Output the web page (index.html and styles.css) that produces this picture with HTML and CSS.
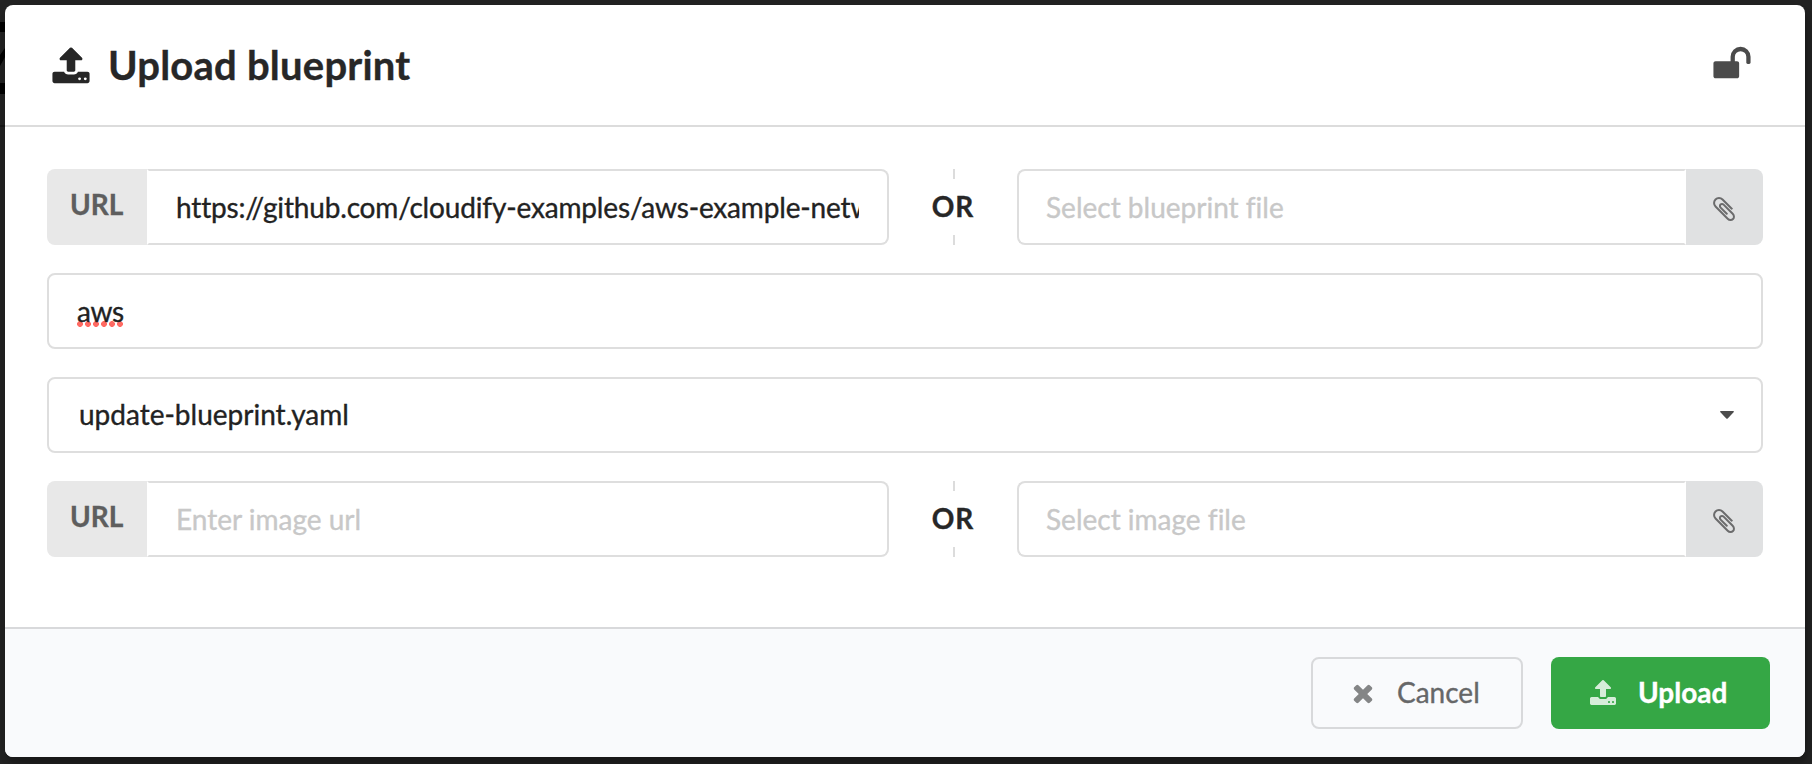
FILE: index.html
```html
<!DOCTYPE html>
<html lang="en">
<head>
<meta charset="utf-8">
<title>Upload blueprint</title>
<link rel="stylesheet" href="styles.css">
</head>
<body>
<svg class="defs" width="0" height="0">
  <symbol id="upload" viewBox="0 0 1792 1792"><path d="M1344 1472q0-26-19-45t-45-19-45 19-19 45 19 45 45 19 45-19 19-45zm256 0q0-26-19-45t-45-19-45 19-19 45 19 45 45 19 45-19 19-45zm128-224v320q0 40-28 68t-68 28h-1472q-40 0-68-28t-28-68v-320q0-40 28-68t68-28h427q21 56 70.5 92t110.5 36h256q61 0 110.5-36t70.5-92h427q40 0 68 28t28 68zm-325-648q-17 40-59 40h-256v448q0 26-19 45t-45 19h-256q-26 0-45-19t-19-45v-448h-256q-42 0-59-40-17-39 14-69l448-448q18-19 45-19t45 19l448 448q31 30 14 69z"/></symbol>
  <symbol id="unlock" viewBox="0 0 1792 1792"><path d="M1728 576v256q0 26-19 45t-45 19h-64q-26 0-45-19t-19-45v-256q0-106-75-181t-181-75-181 75-75 181v192h96q40 0 68 28t28 68v576q0 40-28 68t-68 28h-960q-40 0-68-28t-28-68v-576q0-40 28-68t68-28h672v-192q0-185 131.5-316.5t316.5-131.5 316.5 131.5 131.5 316.5z"/></symbol>
  <symbol id="clip" viewBox="0 0 1792 1792"><path d="M1596 1385q0 117-79 196t-196 79q-135 0-235-100l-777-776q-113-115-113-271 0-159 110-270t269-111q158 0 273 113l605 606q10 10 10 22 0 16-30.5 46.5t-46.5 30.5q-13 0-23-10l-606-607q-79-77-181-77-106 0-179 75t-73 181q0 105 76 181l776 777q63 63 145 63 64 0 106-42t42-106q0-82-63-145l-581-581q-26-24-60-24-29 0-48 19t-19 48q0 32 25 59l410 410q10 10 10 22 0 16-31 47t-47 31q-12 0-22-10l-410-410q-63-61-63-149 0-82 57-139t139-57q88 0 149 63l581 581q100 98 100 235z"/></symbol>
  <symbol id="times" viewBox="0 0 1792 1792"><path d="M1490 1322q0 40-28 68l-136 136q-28 28-68 28t-68-28l-294-294-294 294q-28 28-68 28t-68-28l-136-136q-28-28-28-68t28-68l294-294-294-294q-28-28-28-68t28-68l136-136q28-28 68-28t68 28l294 294 294-294q28-28 68-28t68 28l136 136q28 28 28 68t-28 68l-294 294 294 294q28 28 28 68z"/></symbol>
</svg>
<svg class="behind" width="5" height="130" viewBox="0 0 5 130">
  <path d="M0 22h5v10H0zM0 55l5-7v9l-5 9zM0 83h5v11H0z" fill="#000"/>
  <path d="M0 125h5v2H0z" fill="#181818"/>
</svg>
<main class="modal">
  <header class="header">
    <svg class="icon icon-lg"><use href="#upload"/></svg>
    <h1 class="title">Upload blueprint</h1>
    <svg class="icon icon-lg lock"><use href="#unlock"/></svg>
  </header>
  <section class="content">
    <div class="row">
      <div class="labeled">
        <span class="label">URL</span>
        <div class="field joined-left"><span class="value url">https://github.com/cloudify-examples/aws-example-network</span></div>
      </div>
      <div class="divider">OR</div>
      <div class="file">
        <div class="field joined-right"><span class="value placeholder">Select blueprint file</span></div>
        <div class="attach"><svg class="icon"><use href="#clip"/></svg></div>
      </div>
    </div>
    <div class="field"><span class="value"><span class="misspelled">aws</span></span></div>
    <div class="field dropdown">
      <span class="value">update-blueprint.yaml</span>
      <svg class="caret" viewBox="0 0 14 8"><path d="M.8 0h12.4q1.2.5.4 1.3L7.7 7.5q-.7.6-1.4 0L.4 1.3Q-.4.5.8 0z"/></svg>
    </div>
    <div class="row">
      <div class="labeled">
        <span class="label">URL</span>
        <div class="field joined-left"><span class="value placeholder">Enter image url</span></div>
      </div>
      <div class="divider">OR</div>
      <div class="file">
        <div class="field joined-right"><span class="value placeholder">Select image file</span></div>
        <div class="attach"><svg class="icon"><use href="#clip"/></svg></div>
      </div>
    </div>
  </section>
  <footer class="actions">
    <div class="button cancel"><svg class="icon"><use href="#times"/></svg><span>Cancel</span></div>
    <div class="button primary"><svg class="icon"><use href="#upload"/></svg><span>Upload</span></div>
  </footer>
</main>
</body>
</html>
```
FILE: styles.css
```css
* { box-sizing: border-box; }
html, body { height: 100%; }
body {
  margin: 0;
  padding: 5px 7px 7px 5px;
  overflow: hidden;
  background: #242424;
  font: 28px/34px Lato, "Open Sans", sans-serif;
  font-variant-ligatures: none;
  -webkit-text-stroke: .35px currentColor;
  color: #222;
}
.defs { position: absolute; }
.behind { position: absolute; left: 0; top: 0; }
.modal {
  position: relative;
  display: flex;
  flex-direction: column;
  width: 1800px;
  height: 752px;
  border-radius: 8px;
  overflow: hidden;
  background: #fff;
  box-shadow: 2px 6px 6px rgba(0, 0, 0, .2), 2px 6px 30px 4px rgba(0, 0, 0, .2);
}
.icon { display: block; flex: none; width: 28px; height: 28px; fill: currentColor; }
.icon-lg { width: 40px; height: 40px; }
.header {
  display: flex;
  align-items: flex-start;
  height: 122px;
  padding: 41px 53.5px 0 45.5px;
  border-bottom: 2px solid #dcdcdc;
  color: #272727;
}
.title { margin: -6px 0 0 17.5px; font-size: 40px; line-height: 50px; font-weight: 700; letter-spacing: .22px; }
.lock { margin: -2px 0 0 auto; color: #4b4b4b; }
.content {
  display: flex;
  flex-direction: column;
  gap: 28px;
  height: 500px;
  padding: 42px 42px 0;
}
.row { display: flex; height: 76px; }
.labeled { display: flex; width: 842px; }
.label {
  width: 100px;
  padding: 18px 0 0 23px;
  border-radius: 8px 0 0 8px;
  background: #e8e8e8;
  color: #5e5e5e;
  font-weight: 700;
}
.field {
  display: flex;
  flex: 1;
  min-width: 0;
  max-height: 76px;
  min-height: 76px;
  padding: 19px 28px 0;
  border: 2px solid #dedede;
  border-radius: 8px;
}
.joined-left { padding-left: 27px; border-left-color: transparent; border-radius: 0 8px 8px 0; }
.joined-right { padding-left: 27px; border-right-color: transparent; border-radius: 8px 0 0 8px; }
.value { flex: 1; height: 36px; overflow: hidden; white-space: nowrap; }
.url { letter-spacing: -.16px; }
.placeholder { color: #c8c8c8; }
.file { display: flex; flex: 1; }
.attach {
  width: 77px;
  padding: 26px 0 0 24px;
  border-radius: 0 8px 8px 0;
  background: #e0e1e2;
  color: #6b6b6c;
}
.divider {
  display: flex;
  flex-direction: column;
  align-items: center;
  justify-content: space-between;
  width: 128px;
  color: #272727;
  font-weight: 700;
  letter-spacing: 1px;
  line-height: 32px;
}
.divider::before, .divider::after {
  content: "";
  width: 2px;
  height: 10px;
  margin-left: 2px;
  background: #dcdcdc;
}
.divider::after { margin-top: 2px; }
.misspelled {
  display: inline-block;
  height: 34px;
  letter-spacing: -.3px;
  background: radial-gradient(circle at 3px 3px, #ff6a63 2.6px, transparent 3.2px) 0 27px / 8px 6px repeat-x;
}
.dropdown { padding-top: 18px; padding-left: 30px; }
.caret { width: 14px; height: 8px; margin: 14px -1px 0 0; fill: #4d4d4d; }
.actions {
  display: flex;
  justify-content: flex-end;
  gap: 28px;
  height: 130px;
  padding: 28px 35px 0 0;
  border-top: 2px solid #d8d9db;
  background: #f9fafc;
}
.button { display: flex; height: 72px; border-radius: 8px; }
.cancel { width: 212px; padding: 20px 0 0 36px; border: 2px solid #d8d9db; color: #666768; }
.cancel .icon { color: #848586; }
.cancel span { margin: -4px 0 0 20px; }
.primary { width: 219px; padding: 22px 0 0 38px; background: #35a745; color: #fff; font-weight: 700; }
.primary .icon { opacity: .8; }
.primary span { margin: -4px 0 0 21px; }
```
